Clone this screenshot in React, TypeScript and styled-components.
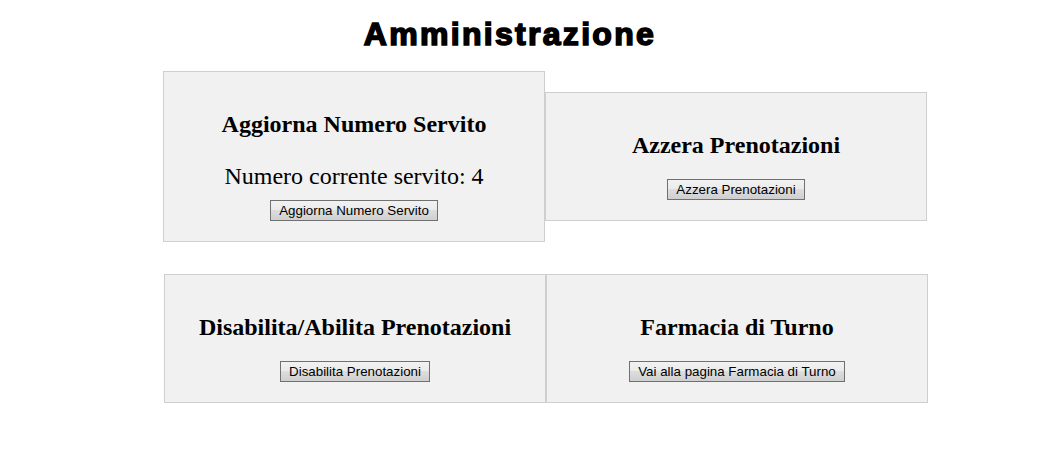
import React from "react";
import styled, { createGlobalStyle } from "styled-components";

const Global = createGlobalStyle`
  html, body { margin: 0; padding: 0; background: #ffffff; }
  body { font-family: "Liberation Serif", "Times New Roman", serif; color: #000; }
`;

const Page = styled.div`
  padding-top: 16px;
  padding-bottom: 20px;
`;

const Title = styled.h1`
  width: 1020px;
  margin: 0 0 19px 0;
  text-align: center;
  font-family: "Liberation Sans", Arial, sans-serif;
  font-weight: 700;
  font-size: 32px;
  line-height: 36px;
  letter-spacing: 2.3px;
  -webkit-text-stroke: 1.6px #000;
  color: #000;
`;

const Row = styled.div<{ $offset: number; $gap: number }>`
  display: flex;
  align-items: center;
  margin-left: ${(p) => p.$offset}px;
  margin-top: ${(p) => p.$gap}px;
`;

const Card = styled.section`
  box-sizing: border-box;
  width: 382px;
  padding: 20px;
  background: #f1f1f1;
  border: 1px solid #cfcfcf;
  text-align: center;
`;

const CardTitle = styled.h2`
  margin: 19px 0 20px;
  font-family: "Liberation Serif", "Times New Roman", serif;
  font-size: 24px;
  line-height: 27px;
  font-weight: 700;
`;

const Counter = styled.p`
  margin: 24px 0 10px;
  font-family: "Liberation Serif", "Times New Roman", serif;
  font-size: 24px;
  line-height: 28px;
`;

const Button = styled.button`
  box-sizing: border-box;
  height: 21px;
  padding: 0 8px;
  font-family: "Liberation Sans", Arial, sans-serif;
  font-size: 13.33px;
  line-height: 19px;
  color: #000;
  border: 1px solid #707070;
  border-radius: 0;
  background: linear-gradient(#f2f2f2 0%, #ebebeb 45%, #dddddd 50%, #cfcfcf 100%);
  cursor: pointer;
`;

export default function App() {
  return (
    <>
      <Global />
      <Page>
        <Title>Amministrazione</Title>
        <Row $offset={163} $gap={0}>
          <Card>
            <CardTitle>Aggiorna Numero Servito</CardTitle>
            <Counter>Numero corrente servito: 4</Counter>
            <Button>Aggiorna Numero Servito</Button>
          </Card>
          <Card>
            <CardTitle>Azzera Prenotazioni</CardTitle>
            <Button>Azzera Prenotazioni</Button>
          </Card>
        </Row>
        <Row $offset={164} $gap={32}>
          <Card>
            <CardTitle>Disabilita/Abilita Prenotazioni</CardTitle>
            <Button>Disabilita Prenotazioni</Button>
          </Card>
          <Card>
            <CardTitle>Farmacia di Turno</CardTitle>
            <Button>Vai alla pagina Farmacia di Turno</Button>
          </Card>
        </Row>
      </Page>
    </>
  );
}
